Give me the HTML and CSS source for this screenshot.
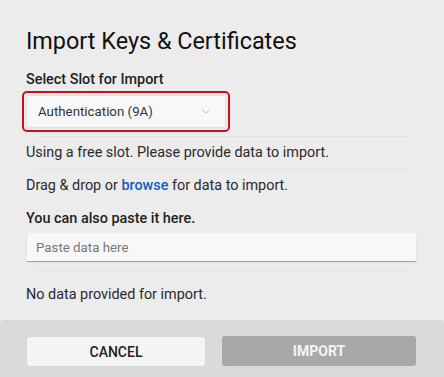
FILE: index.html
```html
<!DOCTYPE html>
<html lang="en">

<head>
    <meta charset="UTF-8">
    <meta name="viewport" content="width=device-width, initial-scale=1.0">
    <title>Import Keys &amp; Certificates</title>
    <link rel="stylesheet" href="styles.css">
</head>

<body>
    <main class="dialog">
        <section class="dialogContent">
            <h1 class="dialogTitle">Import Keys &amp; Certificates</h1>
            <label class="fieldLabel" for="slot">Select Slot for Import</label>
            <div class="slotWrap">
                <div class="slotSelect" id="slot">
                    <span>Authentication (9A)</span>
                    <svg class="chevron" width="8" height="5" viewBox="0 0 8 5">
                        <path d="M0.5 1l3.5 3 3.5-3" fill="none" stroke="#bdbdbd" stroke-width="1" />
                    </svg>
                </div>
            </div>
            <hr class="divider">
            <p class="info">Using a free slot. Please provide data to import.</p>
            <hr class="divider">
            <p class="info">Drag &amp; drop or <a class="link" href="#">browse</a> for data to import.</p>
            <label class="fieldLabel pasteLabel" for="paste">You can also paste it here.</label>
            <input class="pasteInput" type="text" id="paste" placeholder="Paste data here">
            <hr class="divider dividerLast">
            <p class="info infoLast">No data provided for import.</p>
        </section>
        <footer class="dialogFooter">
            <button class="button buttonCancel">CANCEL</button>
            <button class="button buttonImport" disabled>IMPORT</button>
        </footer>
    </main>
</body>

</html>
```

FILE: styles.css
```css
* {
    font-family: 'Roboto', sans-serif;
    box-sizing: border-box;
}

body {
    margin: 0;
    background-color: #ececec;
}

.dialog {
    display: flex;
    flex-direction: column;
    height: 377px;
    background-color: #ececec;
    color: #1e1e1e;
}

.dialogContent {
    display: flex;
    flex-direction: column;
    padding: 27px 28px 0 26px;
}

.dialogTitle {
    margin: 0;
    font-size: 23.4px;
    font-weight: 400;
    line-height: 28px;
    color: #111;
}

.fieldLabel {
    font-size: 14.4px;
    font-weight: 500;
    line-height: 18px;
    margin-top: 16px;
    color: #222;
}

.slotWrap {
    margin: 2px 0 4px -4px;
    width: 208px;
    padding: 3px;
    border: 2px solid #c8111c;
    border-radius: 5px;
}

.slotSelect {
    display: flex;
    justify-content: space-between;
    align-items: center;
    height: 31px;
    padding: 0 15px 0 11px;
    background-color: #f8f8f8;
    border-radius: 3px;
    box-shadow: 0 0 1px 1px #e2e2e2;
    font-size: 13.3px;
    color: #333;
}

.divider {
    border: 0;
    border-top: 1px solid #e0e0e0;
    margin: 0 8px 0 10px;
}

.dividerLast {
    margin-top: 9px;
}

.info {
    margin: 0;
    padding: 8px 0;
    font-size: 14.4px;
    line-height: 16px;
    color: #2a2a2a;
}

.infoLast {
    padding-top: 16px;
}

.link {
    color: #1060c0;
    font-weight: 500;
    text-decoration: none;
}

.pasteLabel {
    margin-top: 8px;
}

.pasteInput {
    margin: 5px 0 0 1px;
    height: 28px;
    padding: 0 9px;
    border: 0;
    border-radius: 3px 3px 0 0;
    background-color: #f8f8f8;
    box-shadow: 0 1px 1px #9c9c9c;
    font-size: 13.3px;
    outline: none;
}

.pasteInput::placeholder {
    color: #777;
}

.dialogFooter {
    margin-top: auto;
    display: grid;
    grid-template-columns: 178px 194px;
    gap: 17px;
    padding: 17px 28px 11px 27px;
    background-color: #dadada;
    border-radius: 4px 4px 0 0;
}

.button {
    height: 29px;
    border: 0;
    border-radius: 3px;
    font-size: 14px;
    font-weight: 500;
}

.buttonCancel {
    background-color: #f5f5f5;
    color: #222;
    box-shadow: 0 0 1px #c8c8c8;
}

.buttonImport {
    height: 30px;
    margin-top: -1px;
    background-color: #a8a8a8;
    color: #f4f4f4;
    font-weight: 700;
}
```
